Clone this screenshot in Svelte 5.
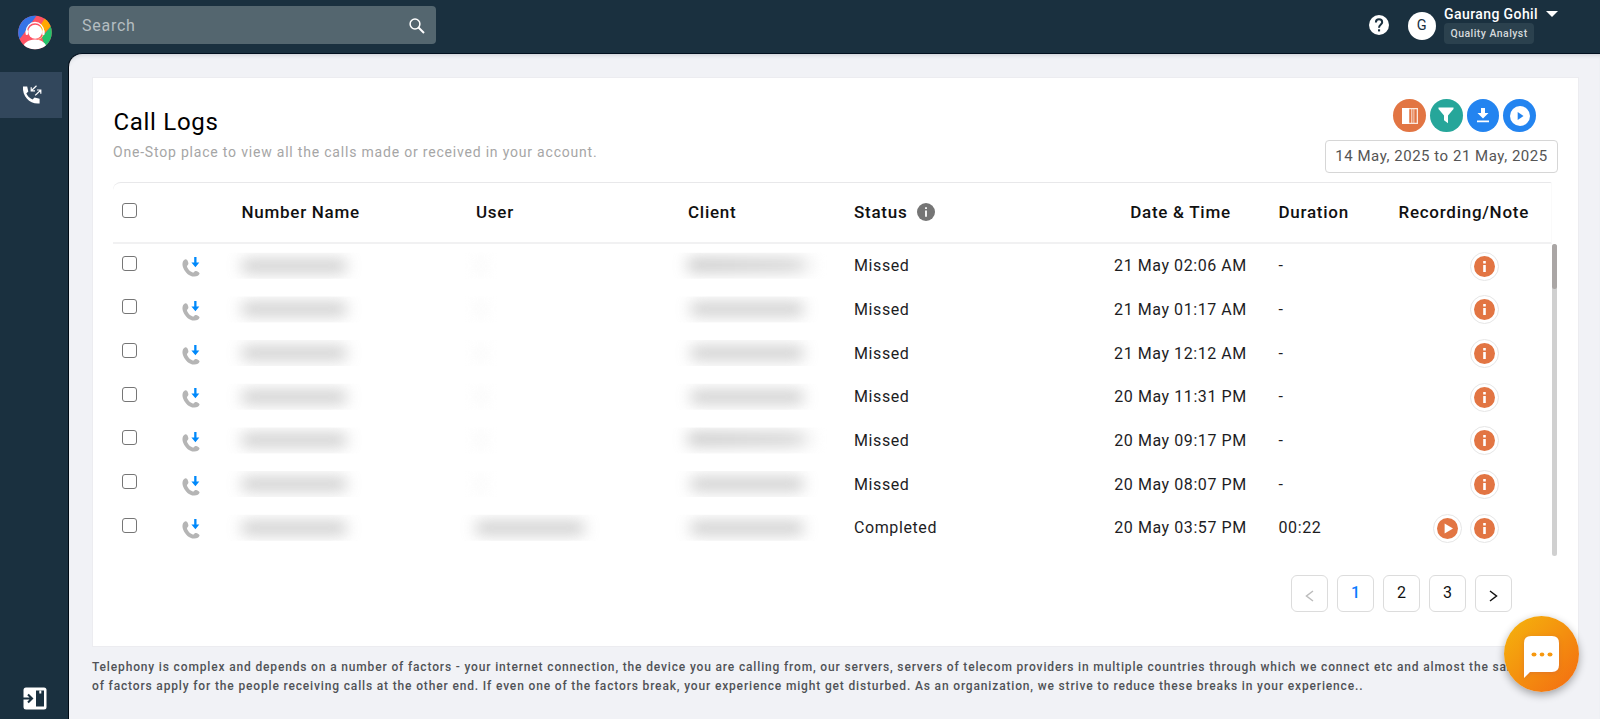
<script>
  const rows = [
    { client: 'name', status: 'Missed', date: '21 May 02:06 AM', duration: '-' },
    { client: 'number', status: 'Missed', date: '21 May 01:17 AM', duration: '-' },
    { client: 'number', status: 'Missed', date: '21 May 12:12 AM', duration: '-' },
    { client: 'number', status: 'Missed', date: '20 May 11:31 PM', duration: '-' },
    { client: 'name', status: 'Missed', date: '20 May 09:17 PM', duration: '-' },
    { client: 'number', status: 'Missed', date: '20 May 08:07 PM', duration: '-' },
    { client: 'number', user: true, status: 'Completed', date: '20 May 03:57 PM', duration: '00:22', play: true }
  ];
  const pages = [1, 2, 3];
</script>

<div class="app">
  <aside class="sidebar">
    <svg class="logo" width="34" height="35" viewBox="0 0 34 35">
      <clipPath id="disc"><circle cx="17" cy="17.5" r="16.8" /></clipPath>
      <g clip-path="url(#disc)">
        <rect width="34" height="35" fill="#ff5364" />
        <path d="M0 0H19L4 21L0 26Z" fill="#3574e8" />
        <path d="M29 0L20 14L25 19L34 10V0Z" fill="#ffa800" />
        <path d="M34 10L24 22L27 32H34Z" fill="#24c26a" />
        <path d="M4 35C5 28 10 24.500 17 24.500S28 28 30 35Z" fill="#fff" />
        <path d="M8.400 18V16.500C8.400 11.500 12 7.500 17 7.500S25.600 11.500 25.600 16.500V18" fill="none" stroke="#fff" stroke-width="1.300" />
        <path d="M25.300 19C25 22 22.500 24 20 24.300" fill="none" stroke="#ffd28a" stroke-width="1" />
        <rect x="7.600" y="15" width="2.400" height="5" rx="1" fill="#fff" />
        <rect x="24.200" y="15" width="2.400" height="5" rx="1" fill="#fff" />
        <circle cx="17.200" cy="16.800" r="7" fill="#fff" />
      </g>
    </svg>
    <div class="nav-item">
      <svg width="20" height="20" viewBox="0 0 20 20">
        <path d="M1 1.500H5.200L6.300 6.500L4.300 8.500C5.500 11 7.500 13.200 10.500 14.500L12.600 12.600L17.600 13.800V18.500C8 19.600 .1 11.500 1 1.500Z" fill="#fff" />
        <path d="M14.500 .8L9.300 5.700M9.200 2.200V5.800H13M13.200 10.400L18.600 5.200M15 5H18.800V8.700" fill="none" stroke="#fff" stroke-width="1.200" />
      </svg>
    </div>
    <svg class="collapse" width="24" height="23" viewBox="0 0 24 23">
      <rect x=".5" y=".5" width="23" height="22" rx="2.500" fill="#fff" />
      <rect x="13" y="3.500" width="8" height="16" fill="#1a303f" />
      <rect x="16.300" y="3.500" width="2" height="3" fill="#fff" />
      <path d="M0 11.500H8.500M5 7.500L9 11.500L5 15.500" fill="none" stroke="#1a303f" stroke-width="2.100" />
    </svg>
  </aside>

  <div class="main">
    <header>
      <div class="search">
        <span>Search</span>
        <svg width="16" height="16" viewBox="0 0 16 16" fill="none" stroke="#fff"><circle cx="6" cy="6" r="4.900" stroke-width="1.500" /><path d="M9.500 9.500L15 15" stroke-width="1.900" /></svg>
      </div>
      <div class="account">
        <svg class="help" width="20" height="20" viewBox="0 0 20 20">
          <circle cx="10" cy="10" r="10" fill="#fff" />
          <path d="M6.900 7.500C6.900 5.500 8.200 4.300 10 4.300S13.200 5.500 13.200 7.300C13.200 9.500 10 9.500 10 12.700" fill="none" stroke="#1a303f" stroke-width="2" />
          <rect x="9" y="14.300" width="2.100" height="2.100" fill="#1a303f" />
        </svg>
        <div class="avatar">G</div>
        <div class="who">
          <div class="name">Gaurang Gohil <i></i></div>
          <div class="role">Quality Analyst</div>
        </div>
      </div>
    </header>

    <div class="content">
      <section class="card">
        <div class="heading">
          <div>
            <h1>Call Logs</h1>
            <p>One-Stop place to view all the calls made or received in your account.</p>
          </div>
          <div class="tools">
            <div class="buttons">
              <b class="orange"><svg width="16" height="16" viewBox="0 0 16 16"><path d="M0 0H16V16H0Z" fill="#fbe9df" /><path d="M0 0H7V16H0Z" fill="#fff" /><path d="M7.300 1.200H9.300V14.800H7.300ZM10.300 1.200H11.500V14.800H10.300ZM12.300 1.200H14.700V14.800H12.300Z" fill="#e27543" /></svg></b>
              <b class="green"><svg width="16" height="17" viewBox="0 0 16 17"><path d="M.5 .5H15.500V2L10 8.500V16.300L6 13.300V8.500L.5 2Z" fill="#fff" /></svg></b>
              <b class="blue"><svg width="12" height="15" viewBox="0 0 12 15"><path d="M4 0H8V5H11.500L6 10.500L.5 5H4ZM0 12.500H12V14.200H0Z" fill="#fff" /></svg></b>
              <b class="blue"><svg width="20" height="20" viewBox="0 0 20 20"><circle cx="10" cy="10" r="10" fill="#fff" /><path d="M7.700 6L13.500 10L7.700 14Z" fill="#2384f0" /></svg></b>
            </div>
            <div class="range">14 May, 2025 to 21 May, 2025</div>
          </div>
        </div>

        <div class="grid thead">
          <span><i class="check"></i></span><span></span>
          <span>Number Name</span><span>User</span><span>Client</span>
          <span class="status">Status
            <svg width="18" height="18" viewBox="0 0 18 18"><circle cx="9" cy="9" r="9" fill="#757575" /><path d="M8.100 4.200H9.900V6.100H8.100ZM8.100 7.400H9.900V13.700H8.100Z" fill="#fff" /></svg>
          </span>
          <span class="date">Date &amp; Time</span><span>Duration</span><span>Recording/Note</span>
        </div>

        <div class="body">
          <div class="rows">
            {#each rows as row}
              <div class="grid row">
                <span><i class="check"></i></span>
                <span class="phone"><svg width="20" height="20" viewBox="0 0 20 20">
                  <path d="M4.500 2.300C1.500 3.300 .8 7 2.200 10.700C4 15.500 8.200 19.300 13 19.600C16 19.700 18.100 18.200 18.600 16.500C18.700 15.300 15.800 13.700 14.400 13.900C13.300 14.100 12.900 15.700 11.700 15.500C9.300 15 6.600 12 6 9.600C5.800 8.400 7.300 7.800 7.400 6.700C7.500 5.200 6.300 2 4.500 2.300Z" fill="#b5b5b5" />
                  <path d="M13.200 0H15.500V5.400H18.300L14.400 10.300L10.400 5.400H13.200Z" fill="#0089fb" />
                </svg></span>
                <span class="masked"><i class="smudge"></i></span>
                <span class="masked"><i class="smudge" class:user={row.user} class:dash={!row.user}></i></span>
                <span class="masked"><i class="smudge {row.client}"></i></span>
                <span>{row.status}</span>
                <span class="date">{row.date}</span>
                <span>{row.duration}</span>
                <span class="actions">
                  {#if row.play}
                    <em><svg width="21" height="21" viewBox="0 0 21 21"><circle cx="10.500" cy="10.500" r="10.500" fill="#e27543" /><path d="M7.600 5.500L16 10.500L7.600 15.500Z" fill="#fff" /></svg></em>
                  {/if}
                  <em><svg width="21" height="21" viewBox="0 0 21 21"><circle cx="10.500" cy="10.500" r="10.500" fill="#e27543" /><path d="M9.200 5H11.800V7.500H9.200ZM9.200 9H11.800V16H9.200Z" fill="#fff" /></svg></em>
                </span>
              </div>
            {/each}
          </div>
          <div class="track"><div class="thumb"></div></div>
        </div>

        <nav class="pager">
          <a class="off"><svg width="9" height="12" viewBox="0 0 9 12"><path d="M8 1L1.500 6L8 11" /></svg></a>
          {#each pages as page}<a class:active={page === 1}>{page}</a>{/each}
          <a><svg width="9" height="12" viewBox="0 0 9 12"><path d="M1 1L7.500 6L1 11" /></svg></a>
        </nav>
      </section>
      <footer>Telephony is complex and depends on a number of factors - your internet connection, the device you are calling from, our servers, servers of telecom providers in multiple countries through which we connect etc and almost the same set<br />of factors apply for the people receiving calls at the other end. If even one of the factors break, your experience might get disturbed. As an organization, we strive to reduce these breaks in your experience..</footer>
    </div>
  </div>

  <div class="chat">
    <svg width="37" height="43" viewBox="0 0 37 43">
      <path d="M8 0H29Q36 0 36 7V29Q36 36 29 36H7L1 42V7Q1 0 8 0Z" fill="#fff" />
      <g fill="#f6980f"><ellipse cx="11" cy="18.500" rx="2.500" ry="2" /><ellipse cx="19" cy="18.500" rx="2.300" ry="2" /><ellipse cx="27" cy="18.500" rx="2.500" ry="2" /></g>
    </svg>
  </div>
</div>

<style>
  :global(body) { margin: 0; overflow: hidden; }
  * { box-sizing: border-box; }
  .app { display: flex; width: 1600px; height: 719px; background: #1a303f; font-family: Roboto, sans-serif; color: #111; overflow: hidden; }
  .sidebar { width: 68px; flex: none; display: flex; flex-direction: column; }
  .logo { margin: 15px 0 0 17.500px; }
  .nav-item { margin-top: 21.500px; width: 62px; height: 46.500px; background: #32475c; padding: 13.500px 0 0 22px; }
  .collapse { margin: auto 0 9px 23px; }
  .main { flex: 1; min-width: 0; display: flex; flex-direction: column; }
  header { height: 53px; flex: none; display: flex; justify-content: space-between; padding: 6px 42px 0 1px; }
  .search { width: 367px; height: 37.500px; border-radius: 4px; background: #54666f; display: flex; align-items: center; justify-content: space-between; padding: 2px 11px 0 13px; font-size: 16px; letter-spacing: .75px; color: #b5bdc1; }
  .account { display: flex; color: #fff; }
  .help { margin: 8.500px 19px 0 0; }
  .avatar { width: 28px; height: 28px; margin: 5.500px 8.500px 0 0; border-radius: 50%; background: #fff; color: #1a303f; font-size: 14.500px; line-height: 28px; text-align: center; }
  .name { display: flex; align-items: center; height: 15px; margin-bottom: 2px; font-size: 14px; font-weight: 500; letter-spacing: .4px; }
  .name i { margin-left: 8px; border: 6px solid transparent; border-top: 6.500px solid #fff; border-bottom: 0; }
  .role { width: 90px; height: 21px; border-radius: 4px; background: #2b414e; color: #d5d9dc; font-size: 10.500px; font-weight: 500; letter-spacing: .45px; line-height: 22px; text-align: center; }
  .content { flex: 1; padding: 23px 21px 0 23px; background: #f1f2f6; border-top: 1px solid #02101f; border-left: 1px solid #000a14; border-radius: 14px 0 0 0; box-shadow: inset 0 4px 4px -3px #c9cdd3; }
  .card { height: 570px; background: #fff; border: 1px solid #ececf0; padding: 20px 19px 0 20px; }
  .heading { display: flex; justify-content: space-between; height: 84px; }
  h1 { margin: 9px 0 0; font-size: 24px; line-height: 30px; font-weight: 400; letter-spacing: .7px; color: #000; padding-left: .5px; }
  p { margin: 5px 0 0; font-size: 14px; line-height: 20px; letter-spacing: .8px; color: #a6a6a6; }
  .tools { display: flex; flex-direction: column; align-items: flex-end; padding: 1px 1px 0 0; }
  .buttons { display: flex; gap: 4px; padding-right: 22px; }
  .buttons b { width: 32.700px; height: 33px; border-radius: 50%; display: flex; align-items: center; justify-content: center; }
  .orange { background: #e27543; }
  .green { background: #26a69a; }
  .blue { background: #2384f0; }
  .range { width: 233px; height: 33px; margin-top: 8px; border: 1px solid #d6d6d6; border-radius: 4px; font-size: 15px; line-height: 31px; letter-spacing: .53px; text-align: center; white-space: nowrap; color: #555; }
  .grid { display: grid; grid-template-columns: 68px 60.500px 234.500px 212px 166px 228.500px 196px 120px 153px; align-items: center; }
  .thead { width: 1439px; height: 62px; padding-bottom: 1.500px; border-top: 1px solid #e8e8ea; border-bottom: 2px solid #f1f1f2; border-right: 1px solid #fafafa; border-radius: 8px 2px 0 0; font-size: 17px; font-weight: 500; letter-spacing: .73px; }
  .thead span { white-space: nowrap; }
  .status { display: flex; align-items: center; gap: 10px; }
  .check { display: block; width: 15px; height: 15px; margin: 0 0 2px 9px; border: 1px solid #767676; border-radius: 3px; }
  .row .check { margin-bottom: 5px; }
  .date { text-align: center; }
  .body { display: flex; }
  .rows { width: 1439px; height: 312px; overflow: hidden; }
  .row { height: 43.650px; font-size: 16px; letter-spacing: .6px; color: #1d1d1f; }
  .row .date { letter-spacing: .57px; }
  .phone svg { display: block; margin-top: 3px; }
  .masked { height: 26px; display: flex; align-items: center; clip-path: inset(0 -20px); }
  .smudge { height: 12px; width: 104px; background: #b4b4b4; opacity: .75; filter: blur(7.500px); }
  .smudge.user { width: 108px; }
  .smudge.dash { width: 8px; margin-left: 1px; background: #f0f0f0; }
  .smudge.number { width: 112px; margin-left: 3px; }
  .smudge.name { width: 124px; background: linear-gradient(90deg, #aaa, #bbb 85%, #eee); }
  .actions { display: flex; gap: 8px; justify-content: flex-end; padding: 1px 53px 0 0; }
  .actions em { width: 29px; height: 29px; border: 1px solid #e6e6e6; border-radius: 50%; display: flex; align-items: center; justify-content: center; }
  .track { width: 5px; height: 312px; background: #d0d0d0; border-radius: 3px; }
  .thumb { height: 45px; background: #aaa6a5; border-radius: 3px; }
  .pager { display: flex; justify-content: flex-end; gap: 9px; padding: 18.500px 47px 0 0; }
  .pager a { width: 37px; height: 37px; padding-bottom: 1px; border: 1px solid #dcdcdc; border-radius: 6px; display: flex; align-items: center; justify-content: center; font-size: 16px; color: #111; }
  .pager svg { margin-top: 6px; fill: none; stroke: #111; stroke-width: 1.500; }
  .pager .off svg { stroke: #bcbcbc; }
  .pager .active { color: #0a7cff; font-weight: 500; }
  footer { margin-top: 11px; margin-left: 0; font-size: 12px; font-weight: 500; line-height: 19.200px; letter-spacing: .844px; white-space: nowrap; color: #505256; }
  .chat { position: absolute; left: 1504px; top: 616px; width: 75px; height: 76px; border-radius: 50%; background: linear-gradient(135deg, #f5b50c, #f36b12); box-shadow: 0 3px 9px #0005; padding: 20px 0 0 19px; }
  .chat svg { filter: drop-shadow(0 1px 2px #b555); }
</style>
